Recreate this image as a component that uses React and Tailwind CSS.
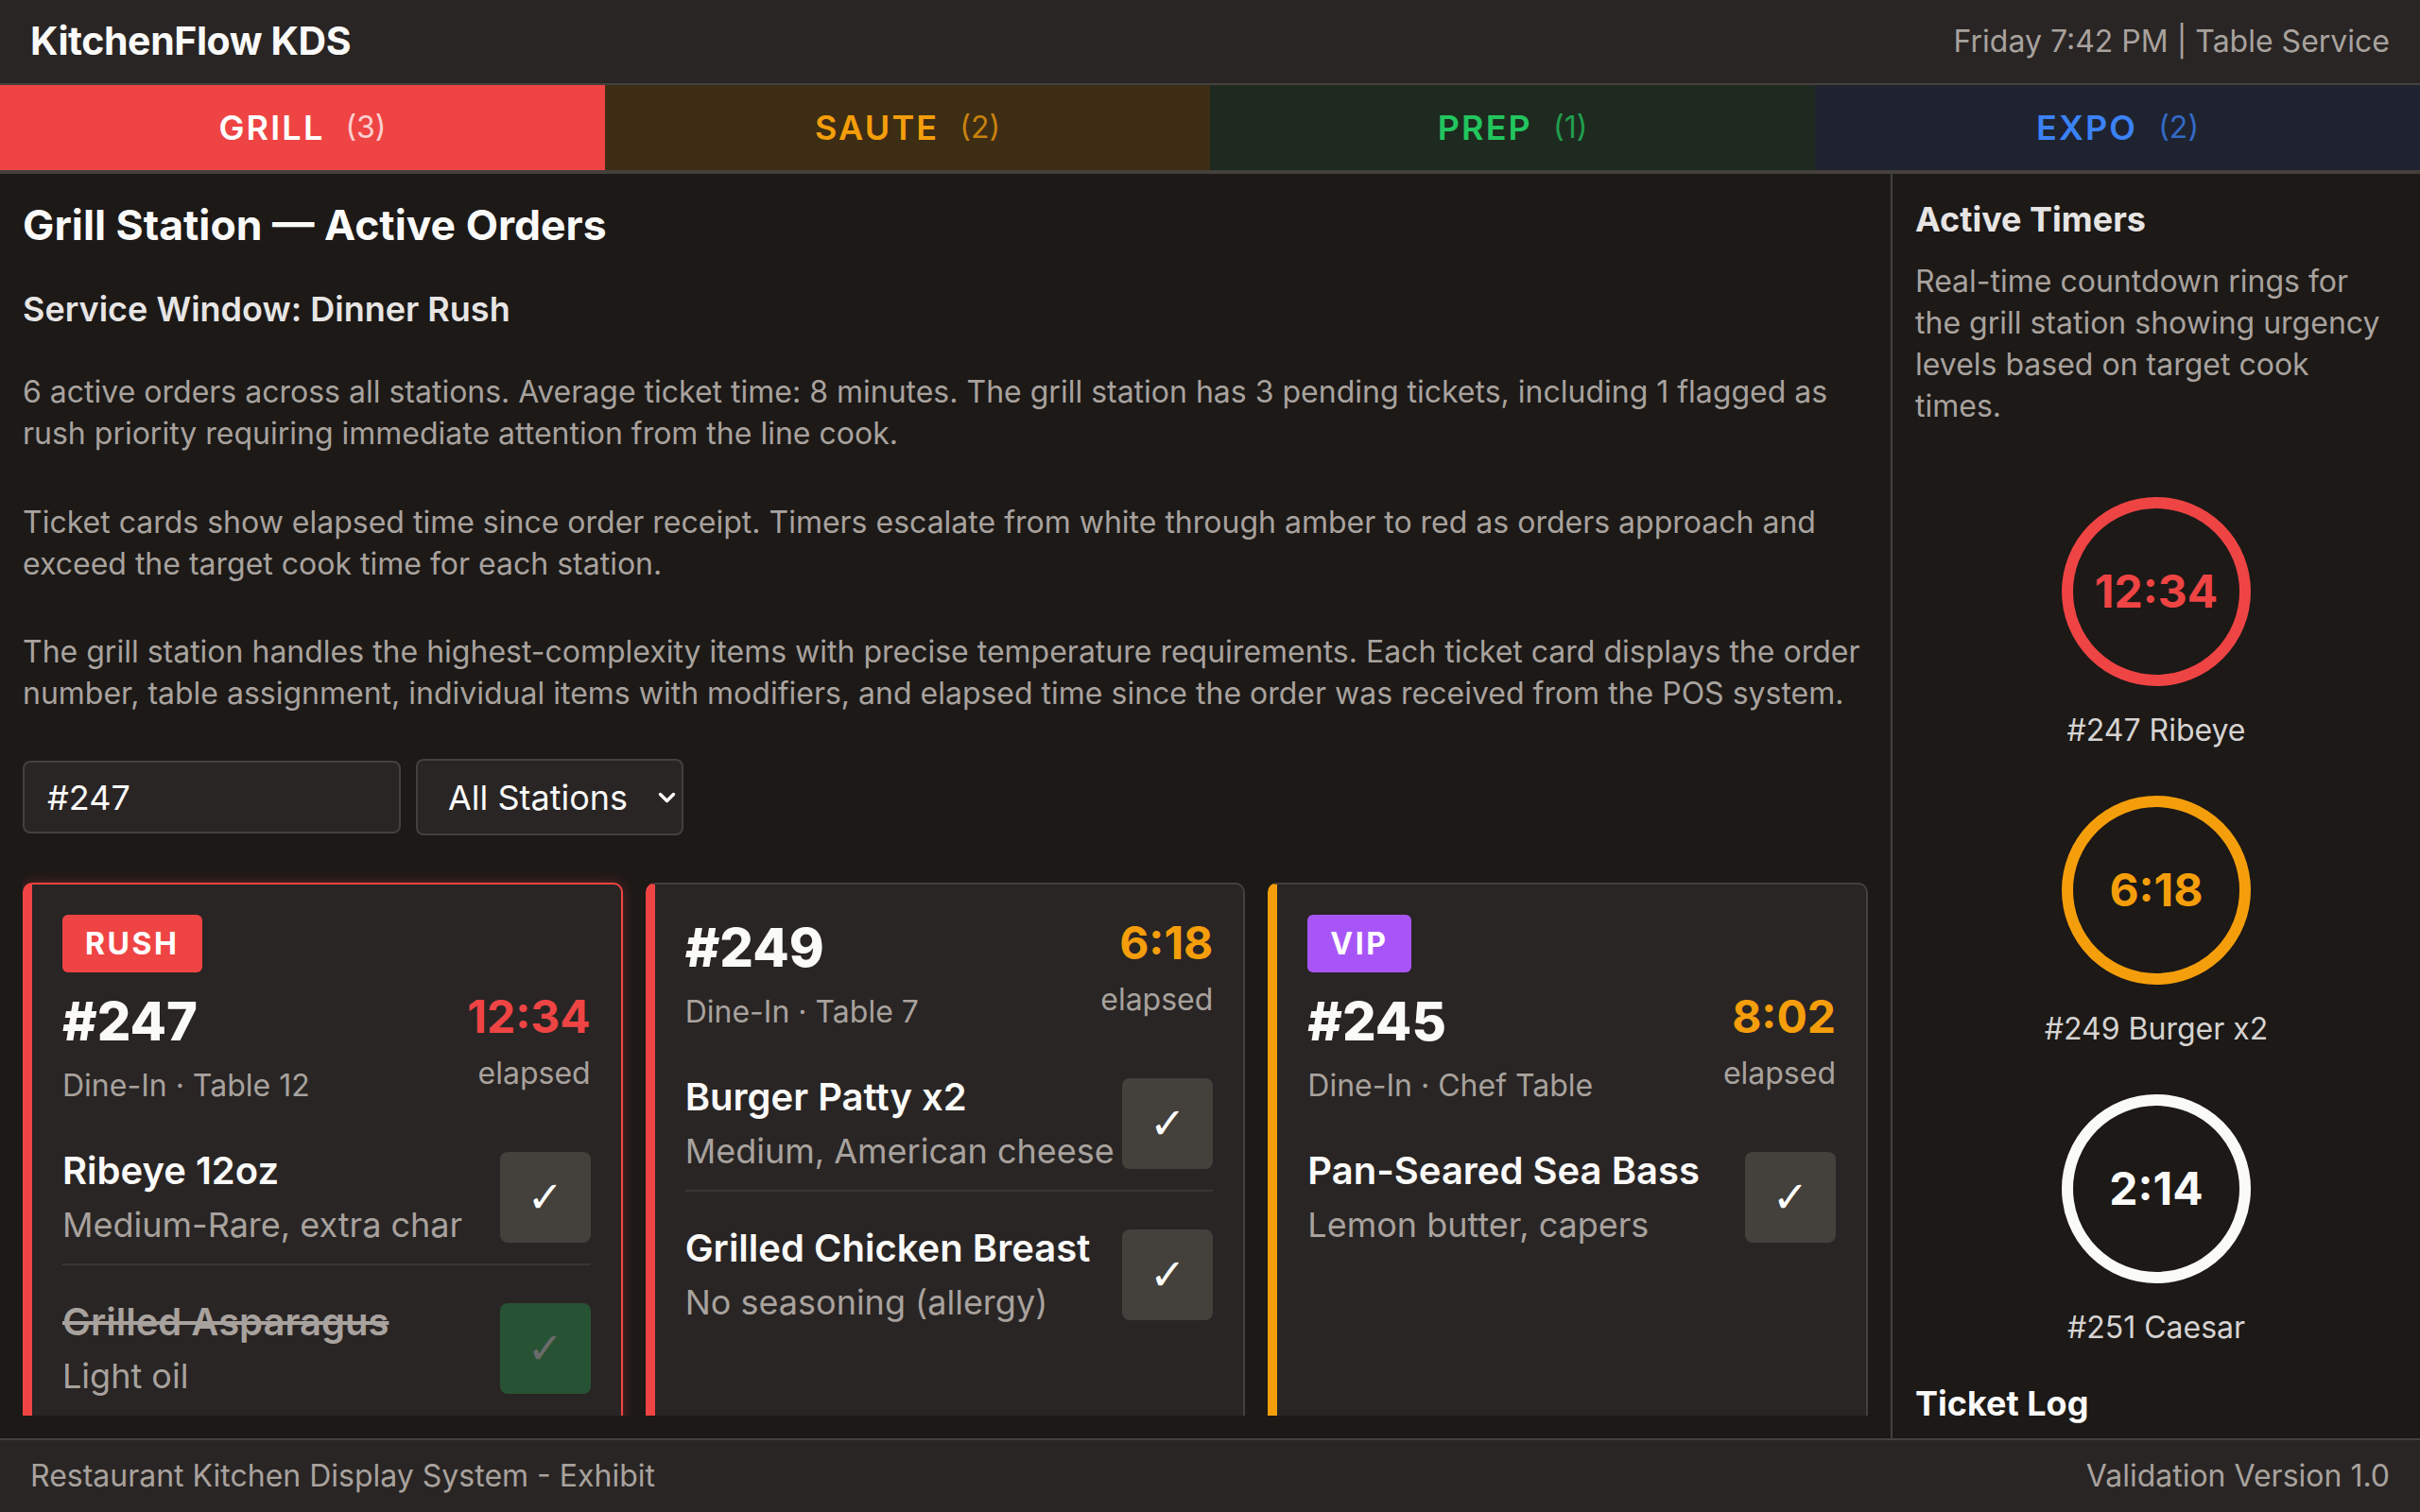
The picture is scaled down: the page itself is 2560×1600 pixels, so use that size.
const tabs = [
  { name: "GRILL", count: 3, cls: "bg-[#ef4444] text-white" },
  { name: "SAUTE", count: 2, cls: "bg-[#3d2d15] text-[#f59e0b]" },
  { name: "PREP", count: 1, cls: "bg-[#1e2a1f] text-[#22c55e]" },
  { name: "EXPO", count: 2, cls: "bg-[#1f2330] text-[#3b82f6]" },
];

const tickets = [
  {
    id: "#247",
    badge: { text: "RUSH", cls: "bg-[#ef4444]" },
    meta: "Dine-In · Table 12",
    time: "12:34",
    timeCls: "text-[#ef4444]",
    cardCls: "border-[#ef4444] border-l-[#ef4444] shadow-[0_0_14px_rgba(239,68,68,0.3)]",
    items: [
      { name: "Ribeye 12oz", mod: "Medium-Rare, extra char" },
      { name: "Grilled Asparagus", mod: "Light oil", done: true },
    ],
  },
  {
    id: "#249",
    meta: "Dine-In · Table 7",
    time: "6:18",
    timeCls: "text-[#f59e0b]",
    cardCls: "border-[#44403c] border-l-[#ef4444]",
    items: [
      { name: "Burger Patty x2", mod: "Medium, American cheese" },
      { name: "Grilled Chicken Breast", mod: "No seasoning (allergy)" },
    ],
  },
  {
    id: "#245",
    badge: { text: "VIP", cls: "bg-[#a855f7]" },
    meta: "Dine-In · Chef Table",
    time: "8:02",
    timeCls: "text-[#f59e0b]",
    cardCls: "border-[#44403c] border-l-[#f59e0b]",
    items: [{ name: "Pan-Seared Sea Bass", mod: "Lemon butter, capers" }],
  },
];

const timers = [
  { time: "12:34", label: "#247 Ribeye", cls: "border-[#ef4444] text-[#ef4444]" },
  { time: "6:18", label: "#249 Burger x2", cls: "border-[#f59e0b] text-[#f59e0b]" },
  { time: "2:14", label: "#251 Caesar", cls: "border-[#fafaf9] text-[#fafaf9]" },
];

const TicketCard = ({ t }) => (
  <div className={`bg-[#292524] border-2 border-l-[10px] rounded-[10px] p-8 ${t.cardCls}`}>
    {t.badge && (
      <span
        className={`inline-block ${t.badge.cls} text-white text-[32px] font-bold tracking-[0.08em] leading-[45px] px-6 py-2 rounded-md mb-[17px]`}
      >
        {t.badge.text}
      </span>
    )}
    <div className="flex justify-between items-start mb-[37px]">
      <div>
        <div className="text-[56px] font-extrabold leading-[70px] text-[#fafaf9]">{t.id}</div>
        <div className="text-[32px] text-[#a8a29e] leading-[50px] mt-2">{t.meta}</div>
      </div>
      <div className="text-right">
        <div className={`text-[48px] font-bold leading-[60px] ${t.timeCls}`}>{t.time}</div>
        <div className="text-[32px] text-[#a8a29e] leading-[48px] mt-[6px]">elapsed</div>
      </div>
    </div>
    <div className="flex flex-col gap-[32px]">
      {t.items.map((it, i) => (
        <div
          key={it.name}
          className={`flex items-center justify-between gap-2 ${
            i < t.items.length - 1 ? "pb-[14px] border-b-2 border-[#3a3633]" : ""
          }`}
        >
          <div className="whitespace-nowrap">
            <div
              className={`text-[40px] font-semibold leading-[56px] ${
                it.done ? "line-through text-[#a8a29e]" : "text-[#fafaf9]"
              }`}
            >
              {it.name}
            </div>
            <div className="text-[36px] text-[#a8a29e] leading-[54px] mt-[2px]">{it.mod}</div>
          </div>
          <button
            className={`shrink-0 w-24 h-24 rounded-lg flex items-center justify-center font-['DejaVu_Sans',sans-serif] text-[46px] ${
              it.done ? "bg-[#285234] text-[#6b6b6b]" : "bg-[#44403c] text-white"
            }`}
          >
            ✓
          </button>
        </div>
      ))}
    </div>
  </div>
);

export default function App() {
  return (
    <div className="h-screen flex flex-col overflow-hidden bg-[#1c1917] text-[#fafaf9] font-['Inter',sans-serif]">
      <header className="h-[90px] shrink-0 flex items-center justify-between px-8 bg-[#292524] border-b-2 border-[#44403c]">
        <div className="text-[41px] font-bold tracking-[-0.01em]">KitchenFlow KDS</div>
        <div className="text-[32px] text-[#a8a29e]">Friday 7:42 PM | Table Service</div>
      </header>

      <nav className="h-[94px] shrink-0 grid grid-cols-4 border-b-4 border-[#44403c]">
        {tabs.map((tab) => (
          <div key={tab.name} className={`flex items-center justify-center gap-[22px] ${tab.cls}`}>
            <span className="text-[36px] font-semibold tracking-[0.06em]">{tab.name}</span>
            <span className="text-[32px] opacity-75">({tab.count})</span>
          </div>
        ))}
      </nav>

      <main className="flex-1 flex min-h-0">
        <section className="flex-1 min-w-0 p-6 flex flex-col">
          <div className="h-full overflow-hidden">
            <h1 className="text-[44.5px] font-bold leading-[60px] mb-[34px]">Grill Station — Active Orders</h1>
            <h2 className="text-[36px] font-semibold text-[#e7e5e4] leading-[50px] mb-[41px]">
              Service Window: Dinner Rush
            </h2>
            <div className="text-[32px] leading-[44px] text-[#a8a29e]">
              <p className="mb-[50px]">
                6 active orders across all stations. Average ticket time: 8 minutes. The grill station has 3
                pending tickets, including 1 flagged as rush priority requiring immediate attention from the
                line cook.
              </p>
              <p className="mb-[49px]">
                Ticket cards show elapsed time since order receipt. Timers escalate from white through amber to
                red as orders approach and exceed the target cook time for each station.
              </p>
              <p className="mb-[47px]">
                The grill station handles the highest-complexity items with precise temperature requirements.
                Each ticket card displays the order number, table assignment, individual items with modifiers,
                and elapsed time since the order was received from the POS system.
              </p>
            </div>
            <div className="flex items-center gap-4 mb-[50px]">
              <input
                defaultValue="#247"
                className="w-[400px] h-[77px] px-6 bg-[#292524] border-2 border-[#44403c] rounded-lg text-[36px] text-[#fafaf9] outline-none"
              />
              <div className="relative">
                <select className="appearance-none w-[283px] h-[81px] pl-[32px] pr-10 bg-[#292524] border-2 border-[#44403c] rounded-lg text-[36px] text-[#fafaf9] outline-none">
                  <option>All Stations</option>
                </select>
                <svg
                  className="absolute right-[8px] top-[35px] pointer-events-none"
                  width="19"
                  height="12"
                  viewBox="0 0 19 12"
                  fill="none"
                >
                  <path d="M2.5 2.5 L9.5 9.5 L16.5 2.5" stroke="#fafaf9" strokeWidth="3.5" strokeLinecap="round" strokeLinejoin="round" />
                </svg>
              </div>
            </div>
            <div className="grid grid-cols-3 gap-6">
              {tickets.map((t) => (
                <TicketCard key={t.id} t={t} />
              ))}
            </div>
          </div>
        </section>

        <aside className="w-[560px] shrink-0 border-l-2 border-[#44403c] p-6 overflow-hidden">
          <h3 className="text-[36px] font-bold leading-[48px] text-[#e7e5e4] mb-5">Active Timers</h3>
          <p className="text-[32px] leading-[44px] text-[#a8a29e]">
            Real-time countdown rings for the grill station showing urgency levels based on target cook times.
          </p>
          <div className="mt-[74px] flex flex-col items-center gap-[47px]">
            {timers.map((tm) => (
              <div key={tm.label} className="flex flex-col items-center">
                <div
                  className={`w-[200px] h-[200px] rounded-full border-[12px] flex items-center justify-center text-[48px] font-bold ${tm.cls}`}
                >
                  {tm.time}
                </div>
                <div className="mt-6 text-[32px] leading-[45px] text-[#d6d3d1]">{tm.label}</div>
              </div>
            ))}
          </div>
          <h3 className="mt-[34px] text-[36px] font-bold leading-[48px] text-[#fafaf9]">Ticket Log</h3>
        </aside>
      </main>

      <footer className="h-[78px] shrink-0 flex items-center justify-between px-8 bg-[#292524] border-t-2 border-[#44403c] text-[32px] text-[#a8a29e]">
        <span>Restaurant Kitchen Display System - Exhibit</span>
        <span>Validation Version 1.0</span>
      </footer>
    </div>
  );
}
